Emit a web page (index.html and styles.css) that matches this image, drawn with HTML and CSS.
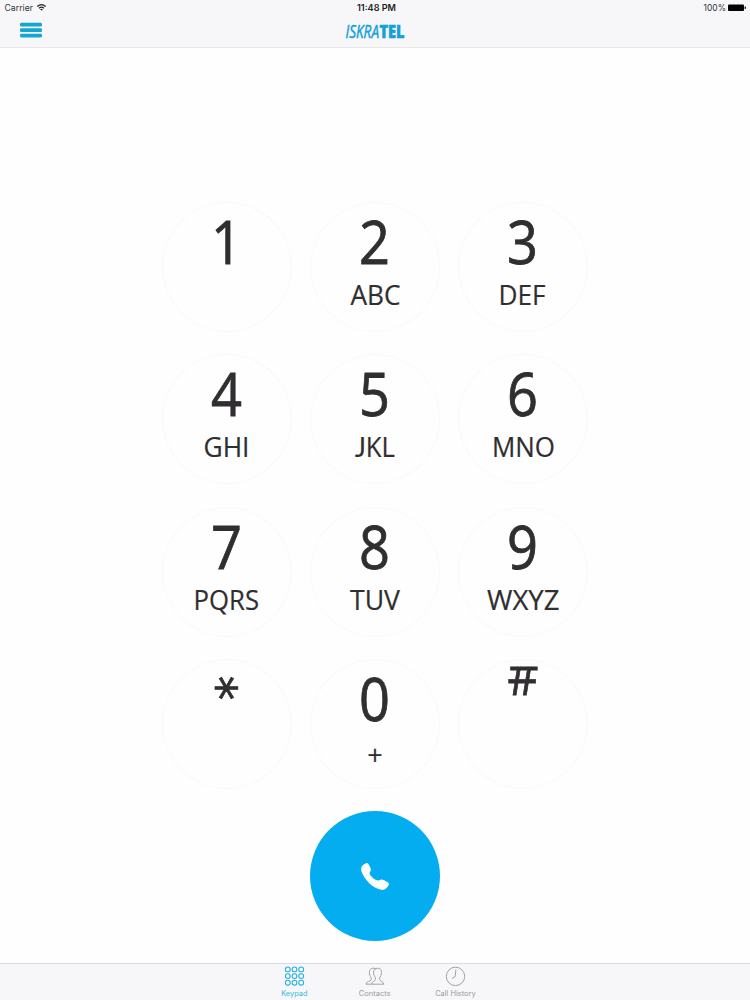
FILE: index.html
```html
<!DOCTYPE html>
<html lang="en">
<head>
<meta charset="utf-8">
<title>Keypad</title>
<link rel="stylesheet" href="styles.css">
</head>
<body>
<div class="app">
  <header class="header">
    <svg class="header-art" viewBox="0 0 750 47">
      <text class="status" x="4.5" y="11" textLength="28.5" lengthAdjust="spacingAndGlyphs">Carrier</text>
      <g class="wifi">
        <path d="M37.3 6.5Q41.5 2.8 45.7 6.5M39 8.2Q41.5 6.1 44 8.2"/>
        <path class="wifi-dot" d="M40.1 9.3Q41.5 8.2 42.9 9.3L41.5 10.8Z"/>
      </g>
      <text class="status strong" x="357" y="11" textLength="39" lengthAdjust="spacingAndGlyphs">11:48 PM</text>
      <text class="status" x="703.5" y="11" textLength="22.5" lengthAdjust="spacingAndGlyphs">100%</text>
      <rect x="728" y="4.5" width="16" height="6.6" rx="1"/>
      <path d="M744.7 6.3q1.3.2 1.3 1.5t-1.3 1.5z"/>
      <g class="menu">
        <rect x="20" y="22.8" width="22" height="3.8" rx="1.4"/>
        <rect x="20" y="28.3" width="22" height="3.8" rx="1.4"/>
        <rect x="20" y="33.7" width="22" height="3.8" rx="1.4"/>
      </g>
      <text class="brand brand-light" x="345.5" y="38" textLength="33.5" lengthAdjust="spacingAndGlyphs">ISKRA</text>
      <text class="brand brand-bold" x="379.5" y="38" textLength="25" lengthAdjust="spacingAndGlyphs">TEL</text>
    </svg>
  </header>

  <main class="main">
    <div class="keys">
      <svg class="key" viewBox="0 0 130 130"><text class="digit" transform="translate(64.5 62) scale(.91 1)">1</text></svg>
      <svg class="key" viewBox="0 0 130 130"><text class="digit" transform="translate(64.5 62) scale(.91 1)">2</text><text class="letters" x="40.5" y="103.300" textLength="50" lengthAdjust="spacingAndGlyphs">ABC</text></svg>
      <svg class="key" viewBox="0 0 130 130"><text class="digit" transform="translate(64.5 62) scale(.91 1)">3</text><text class="letters" x="40.5" y="103.300" textLength="47" lengthAdjust="spacingAndGlyphs">DEF</text></svg>
      <svg class="key" viewBox="0 0 130 130"><text class="digit" transform="translate(64.5 62) scale(.91 1)">4</text><text class="letters" x="41.500" y="103.300" textLength="46" lengthAdjust="spacingAndGlyphs">GHI</text></svg>
      <svg class="key" viewBox="0 0 130 130"><text class="digit" transform="translate(64.5 62) scale(.91 1)">5</text><text class="letters" x="45" y="103.300" textLength="40" lengthAdjust="spacingAndGlyphs"><tspan class="straight-j">J</tspan>KL</text></svg>
      <svg class="key" viewBox="0 0 130 130"><text class="digit" transform="translate(64.5 62) scale(.91 1)">6</text><text class="letters" x="34" y="103.300" textLength="63" lengthAdjust="spacingAndGlyphs">MNO</text></svg>
      <svg class="key" viewBox="0 0 130 130"><text class="digit" transform="translate(64.5 62) scale(.91 1)">7</text><text class="letters" x="31.500" y="103.300" textLength="65.500" lengthAdjust="spacingAndGlyphs">PQRS</text></svg>
      <svg class="key" viewBox="0 0 130 130"><text class="digit" transform="translate(64.5 62) scale(.91 1)">8</text><text class="letters" x="40" y="103.300" textLength="50" lengthAdjust="spacingAndGlyphs">TUV</text></svg>
      <svg class="key" viewBox="0 0 130 130"><text class="digit" transform="translate(64.5 62) scale(.91 1)">9</text><text class="letters" x="29" y="103.300" textLength="72.500" lengthAdjust="spacingAndGlyphs">WXYZ</text></svg>
      <svg class="key" viewBox="0 0 130 130"><text class="star" transform="translate(62 29) rotate(90)" x="0" y="23">*</text></svg>
      <svg class="key" viewBox="0 0 130 130"><text class="digit" transform="translate(64.5 62) scale(.91 1)">0</text><text class="letters middle" x="65" y="105.500">+</text></svg>
      <svg class="key" viewBox="0 0 130 130">
        <clipPath id="hash-top"><rect x="40" y="7.600" width="50" height="40"/></clipPath>
        <g clip-path="url(#hash-top)"><text class="hash" x="49.500" y="36" textLength="31" lengthAdjust="spacingAndGlyphs">#</text></g>
      </svg>
    </div>
    <div class="call">
      <svg class="phone" viewBox="0 -.7 28 28"><path d="M.3 4.500C.8 2.900 4.500.2 6.200.2C7.500.3 9.500 5 9.900 6.800C10.200 8.300 8.300 9.300 8.600 10.900C9.200 13.400 14.200 17.800 16.900 17.900C18.500 17.900 19 16.500 20.600 16.700C22.500 17.100 27.600 19.300 28 20.800C28.300 22.300 25.200 26.300 23 27C20.500 27.700 14 25.200 10.300 22.200C5.500 18.300.5 10.800.2 7.200Z"/></svg>
    </div>
  </main>

  <nav class="tabs">
    <svg class="tabs-art" viewBox="0 0 750 36">
      <g class="outline active">
        <circle cx="287.8" cy="5.400" r="2.400"/><circle cx="294.5" cy="5.400" r="2.400"/><circle cx="301.200" cy="5.400" r="2.400"/>
        <circle cx="287.8" cy="12.100" r="2.400"/><circle cx="294.5" cy="12.100" r="2.400"/><circle cx="301.200" cy="12.100" r="2.400"/>
        <circle cx="287.8" cy="18.700" r="2.400"/><circle cx="294.5" cy="18.700" r="2.400"/><circle cx="301.200" cy="18.700" r="2.400"/>
      </g>
      <g class="outline">
        <path d="M376.200 5.200C375.400 4.400 374.200 4.100 373.200 4.200C370.600 4.300 369.300 6 369.400 8.500C369.400 10.700 370.100 12.300 371.100 13.600V16C370.800 17.300 365.800 17.500 366 20.200H371.500"/>
        <path d="M377.700 4.200C375 4.200 373.400 6 373.600 8.800C373.700 10.700 374.300 12.300 375.300 13.500V15.700C375 17.300 371.800 17.700 371.500 20.200H383.700C384 17.800 380 17.200 379.700 15.700V13.500C380.700 12.300 381.400 10.700 381.500 8.700C381.700 6 380.400 4.200 377.700 4.200Z"/>
        <circle cx="455.500" cy="12.400" r="9.200"/><path d="M455.900 5.500L455.200 12.600L452 14.500"/>
      </g>
      <text class="tab-label active-label" x="281.200" y="31.500" textLength="26.300" lengthAdjust="spacingAndGlyphs">Keypad</text>
      <text class="tab-label" x="358.700" y="31.500" textLength="32" lengthAdjust="spacingAndGlyphs">Contacts</text>
      <text class="tab-label" x="435.200" y="31.500" textLength="40.500" lengthAdjust="spacingAndGlyphs">Call History</text>
    </svg>
  </nav>
</div>
</body>
</html>
```
FILE: styles.css
```css
body { margin: 0; background: #fefefe; font-family: Inter, "Liberation Sans", sans-serif; }
svg { display: block; }
.app { width: 750px; height: 1000px; display: flex; flex-direction: column; overflow: hidden; }
.header { height: 47px; flex: none; background: #f7f7f9; border-bottom: 1px solid #e8e8ea; }
.header-art { width: 750px; height: 47px; }
.status { font-size: 8.3px; fill: #333; }
.strong { font-weight: 600; fill: #222; }
.wifi { fill: none; stroke: #222; stroke-width: 1.2; }
.wifi .wifi-dot { fill: #222; stroke: none; }
.menu { fill: #13a5d4; }
.brand { font-family: "Open Sans", sans-serif; font-size: 18px; fill: #14a0d8; }
.brand-light { font-style: italic; stroke: #14a0d8; stroke-width: .5; }
.brand-bold { font-weight: 800; stroke: #14a0d8; stroke-width: .6; }
.main { flex: 1; display: flex; flex-direction: column; align-items: center; padding-top: 154px; gap: 22px; }
.keys { display: grid; grid-template-columns: repeat(3, 130px); column-gap: 18px; row-gap: 22.330px; }
.key { box-sizing: border-box; width: 130px; height: 130px; border-radius: 50%; box-shadow: inset 0 0 0 1px #f9f9f9; overflow: visible; font-family: "Open Sans", "Noto Sans", sans-serif; fill: #302e31; }
.digit { font-size: 59.500px; text-anchor: middle; stroke: #302e31; stroke-width: .8; }
.letters { font-size: 27px; stroke: #302e31; stroke-width: .2; }
.straight-j { font-family: Lato, sans-serif; }
.middle { text-anchor: middle; }
.star { font-family: "DejaVu Sans", sans-serif; font-size: 49px; text-anchor: middle; stroke: #302e31; stroke-width: .8; }
.hash { font-size: 56px; font-weight: 400; stroke: #302e31; stroke-width: .8; }
.call { width: 130px; height: 130px; border-radius: 50%; background: #03adef; display: flex; align-items: center; justify-content: center; }
.phone { width: 28px; height: 28px; fill: #fff; overflow: visible; }
.tabs { height: 36px; flex: none; background: #f7f7f9; border-top: 1px solid #dadadc; }
.tabs-art { width: 750px; height: 36px; }
.outline { fill: none; stroke: #999; stroke-width: .9; }
.active { stroke: #27b2d8; stroke-width: 1.100; }
.tab-label { font-size: 7.200px; fill: #9a9a9c; }
.active-label { fill: #3ab9dc; }
```
